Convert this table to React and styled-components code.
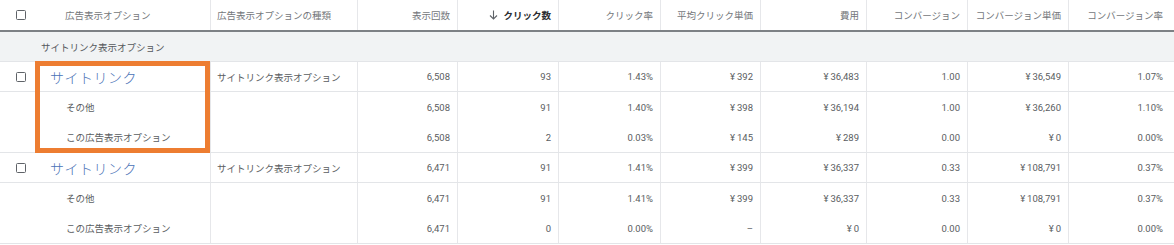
import React from "react";
import styled, { createGlobalStyle } from "styled-components";

const GlobalStyle = createGlobalStyle`
  html, body {
    margin: 0;
    padding: 0;
    background: #ffffff;
  }
  body {
    font-family: Roboto, "Noto Sans CJK JP", "Noto Sans", sans-serif;
    -webkit-font-smoothing: antialiased;
  }
`;

const COLS = "35px 176px 147px 100px 101px 102px 100px 106px 101px 101px 105px";

const Table = styled.div`
  width: 1174px;
  overflow: hidden;
`;

const Row = styled.div`
  display: grid;
  grid-template-columns: ${COLS};
  height: ${(p) => p.$height || 30}px;
  border-bottom: ${(p) => (p.$divider ? `${p.$divider}px solid ${p.$dividerColor || "#e3e5e8"}` : "none")};
  box-sizing: content-box;
`;

const Block = styled.div`
  position: relative;
`;

const Cell = styled.div`
  display: flex;
  align-items: center;
  justify-content: ${(p) => (p.$right ? "flex-end" : "flex-start")};
  padding: ${(p) => (p.$right ? `0 ${p.$pad || 7}px 0 0` : `0 0 0 ${p.$pad || 6}px`)};
  border-right: ${(p) => (p.$noLine ? "none" : "1px solid #e6e7ea")};
  font-size: 9.5px;
  color: ${(p) => (p.$head ? "#74777b" : "#5a5d61")};
  white-space: nowrap;
  overflow: hidden;
  box-sizing: border-box;
`;

const CheckCell = styled(Cell)`
  padding: 0 0 0 16px;
  border-right: none;
`;

const Checkbox = styled.span`
  width: 10px;
  height: 10px;
  border: 1.6px solid #5f6368;
  border-radius: 1.5px;
  box-sizing: border-box;
`;

const SortLabel = styled.span`
  font-weight: 700;
  color: #2b2d30;
  font-size: 9.5px;
`;

const ArrowIcon = styled.svg`
  width: 9px;
  height: 10px;
  margin-right: 5px;
`;

const GroupRow = styled.div`
  height: 29px;
  background: #f1f3f4;
  border-bottom: 1px solid #e3e5e8;
  display: flex;
  align-items: center;
  padding-left: 41px;
  font-size: 9.5px;
  color: #55585c;
`;

const LinkText = styled.span`
  color: #4a72b6;
  font-size: 14px;
  font-weight: 300;
  letter-spacing: 0.5px;
`;

const Highlight = styled.div`
  position: absolute;
  left: 35px;
  top: -1px;
  width: 175px;
  bottom: 0;
  border: 5px solid #ed7d31;
  box-sizing: border-box;
  pointer-events: none;
`;

const headers = [
  "表示回数",
  "sort",
  "クリック率",
  "平均クリック単価",
  "費用",
  "コンバージョン",
  "コンバージョン単価",
  "コンバージョン率",
];

const Y = "¥\u2009";

const groups = [
  {
    main: ["6,508", "93", "1.43%", `${Y}392`, `${Y}36,483`, "1.00", `${Y}36,549`, "1.07%"],
    subs: [
      ["その他", ["6,508", "91", "1.40%", `${Y}398`, `${Y}36,194`, "1.00", `${Y}36,260`, "1.10%"]],
      ["この広告表示オプション", ["6,508", "2", "0.03%", `${Y}145`, `${Y}289`, "0.00", `${Y}0`, "0.00%"]],
    ],
    highlight: true,
  },
  {
    main: ["6,471", "91", "1.41%", `${Y}399`, `${Y}36,337`, "0.33", `${Y}108,791`, "0.37%"],
    subs: [
      ["その他", ["6,471", "91", "1.41%", `${Y}399`, `${Y}36,337`, "0.33", `${Y}108,791`, "0.37%"]],
      ["この広告表示オプション", ["6,471", "0", "0.00%", "–", `${Y}0`, "0.00", `${Y}0`, "0.00%"]],
    ],
  },
];

function Numbers({ values }) {
  return values.map((v, i) => (
    <Cell key={i} $right $pad={i === values.length - 1 ? 11 : 7} $noLine={i === values.length - 1}>
      {v}
    </Cell>
  ));
}

export default function App() {
  return (
    <>
      <GlobalStyle />
      <Table>
        <Row $height={30} $divider={2} $dividerColor="#7d8185">
          <CheckCell $noLine>
            <Checkbox />
          </CheckCell>
          <Cell $head $pad={30}>広告表示オプション</Cell>
          <Cell $head>広告表示オプションの種類</Cell>
          {headers.map((h, i) =>
            h === "sort" ? (
              <Cell key={i} $head $right>
                <ArrowIcon viewBox="0 0 9 10">
                  <path d="M4.5 0.5v8.5M1 5.5l3.5 3.5 3.5-3.5" fill="none" stroke="#5f6368" strokeWidth="1.1" />
                </ArrowIcon>
                <SortLabel>クリック数</SortLabel>
              </Cell>
            ) : (
              <Cell key={i} $head $right $pad={i === headers.length - 1 ? 11 : 7} $noLine={i === headers.length - 1}>
                {h}
              </Cell>
            )
          )}
        </Row>

        <GroupRow>サイトリンク表示オプション</GroupRow>

        {groups.map((g, gi) => (
          <Block key={gi}>
            <Row $height={29} $divider={1}>
              <CheckCell $noLine>
                <Checkbox />
              </CheckCell>
              <Cell $pad={15}>
                <LinkText>サイトリンク</LinkText>
              </Cell>
              <Cell>サイトリンク表示オプション</Cell>
              <Numbers values={g.main} />
            </Row>
            {g.subs.map(([label, vals], si) => (
              <Row key={si} $height={30} $divider={si === g.subs.length - 1 ? 1 : 0}>
                <CheckCell $noLine />
                <Cell $pad={31}>{label}</Cell>
                <Cell />
                <Numbers values={vals} />
              </Row>
            ))}
            {g.highlight && <Highlight />}
          </Block>
        ))}
      </Table>
    </>
  );
}
